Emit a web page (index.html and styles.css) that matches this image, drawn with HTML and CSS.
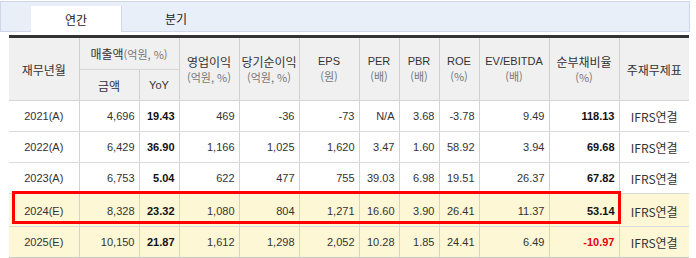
FILE: index.html
```html
<!DOCTYPE html>
<html lang="ko">
<head>
  <meta charset="UTF-8">
  <title>재무 요약</title>
  <link rel="stylesheet" href="styles.css">
</head>
<body>
<div class="wrap">
  <div class="tabs">
    <a class="tab on">연간</a>
    <a class="tab">분기</a>
  </div>
  <div class="grid">
    <table>
      <colgroup>
        <col style="width:70px"><col style="width:60px"><col style="width:40px">
        <col style="width:60px"><col style="width:60px"><col style="width:60px">
        <col style="width:40px"><col style="width:40px"><col style="width:40px">
        <col style="width:70px"><col style="width:70px"><col style="width:70px">
      </colgroup>
      <thead>
        <tr class="h1">
          <th rowspan="2">재무년월</th>
          <th colspan="2">매출액<span class="unit">(억원, %)</span></th>
          <th rowspan="2">영업이익<br><span class="unit">(억원, %)</span></th>
          <th rowspan="2">당기순이익<br><span class="unit">(억원, %)</span></th>
          <th rowspan="2" class="en">EPS<br><span class="unit">(원)</span></th>
          <th rowspan="2" class="en">PER<br><span class="unit">(배)</span></th>
          <th rowspan="2" class="en">PBR<br><span class="unit">(배)</span></th>
          <th rowspan="2" class="en">ROE<br><span class="unit">(%)</span></th>
          <th rowspan="2" class="en">EV/EBITDA<br><span class="unit">(배)</span></th>
          <th rowspan="2">순부채비율<br><span class="unit">(%)</span></th>
          <th rowspan="2">주재무제표</th>
        </tr>
        <tr class="h2">
          <th>금액</th>
          <th class="en">YoY</th>
        </tr>
      </thead>
      <tbody>
        <tr>
          <td class="yr">2021(A)</td><td>4,696</td><td class="b">19.43</td><td>469</td><td>-36</td><td>-73</td>
          <td>N/A</td><td>3.68</td><td>-3.78</td><td>9.49</td><td class="b">118.13</td><td class="std">IFRS연결</td>
        </tr>
        <tr>
          <td class="yr">2022(A)</td><td>6,429</td><td class="b">36.90</td><td>1,166</td><td>1,025</td><td>1,620</td>
          <td>3.47</td><td>1.60</td><td>58.92</td><td>3.94</td><td class="b">69.68</td><td class="std">IFRS연결</td>
        </tr>
        <tr>
          <td class="yr">2023(A)</td><td>6,753</td><td class="b">5.04</td><td>622</td><td>477</td><td>755</td>
          <td>39.03</td><td>6.98</td><td>19.51</td><td>26.37</td><td class="b">67.82</td><td class="std">IFRS연결</td>
        </tr>
        <tr class="est first">
          <td class="yr">2024(E)</td><td>8,328</td><td class="b">23.32</td><td>1,080</td><td>804</td><td>1,271</td>
          <td>16.60</td><td>3.90</td><td>26.41</td><td>11.37</td><td class="b">53.14</td><td class="std">IFRS연결</td>
        </tr>
        <tr class="est">
          <td class="yr">2025(E)</td><td>10,150</td><td class="b">21.87</td><td>1,612</td><td>1,298</td><td>2,052</td>
          <td>10.28</td><td>1.85</td><td>24.41</td><td>6.49</td><td class="b neg">-10.97</td><td class="std">IFRS연결</td>
        </tr>
      </tbody>
    </table>
    <div class="mark"></div>
  </div>
</div>
</body>
</html>
```
FILE: styles.css
```css
html, body {
  margin: 0;
  padding: 0;
  background-color: #fff;
}
.wrap {
  width: 680px;
  margin-left: 9px;
  padding-top: 1px;
  font-family: "Liberation Sans", "Noto Sans CJK KR", sans-serif;
  color: #333;
}
.tabs {
  display: flex;
  height: 25px;
  padding: 4px 0 0 30px;
  background-color: #e8eff9;
  border: 1px solid #cdd7e8;
  margin-left: -9px;
  width: 658px;
}
.tab {
  display: flex;
  align-items: center;
  justify-content: center;
  width: 108px;
  height: 25px;
  font-family: "Noto Sans CJK KR", sans-serif;
  font-size: 12px;
  color: #222;
}
.tab.on {
  width: 90px;
  background-color: #fff;
  border-right: 1px solid #cdd7e8;
  height: 26px;
}
.grid {
  position: relative;
  margin-top: 3px;
}
table {
  width: 680px;
  table-layout: fixed;
  border-collapse: collapse;
  border-top: 3px solid #333;
  border-bottom: 2px solid #c8c8c8;
}
th {
  background-color: #f0f0f0;
  font-family: "Noto Sans CJK KR", sans-serif;
  font-weight: normal;
  font-size: 12px;
  line-height: 15px;
  color: #333;
  border-left: 1px solid #cfcfcf;
  border-bottom: 1px solid #d6d6d6;
  padding: 0;
  white-space: nowrap;
}
th:first-child {
  border-left: none;
}
.h1 th {
  height: 31px;
}
.h2 th {
  height: 30px;
}
.h2 th:first-child {
  border-left: 1px solid #cfcfcf;
}
th.en {
  font-family: "Liberation Sans", "Noto Sans CJK KR", sans-serif;
  font-size: 11px;
}
.unit {
  font-family: "Noto Sans CJK KR", sans-serif;
  font-size: 11px;
  line-height: 15px;
  color: #777;
}
td {
  height: 30px;
  padding: 0 4px 0 0;
  font-size: 11px;
  text-align: right;
  color: #333;
  border-left: 1px solid #d3d3d3;
  border-bottom: 1px solid #dadada;
  white-space: nowrap;
}
td:first-child {
  border-left: none;
}
td.yr {
  text-align: center;
  padding: 0;
}
td.b {
  font-weight: bold;
  color: #111;
}
td.neg {
  color: #e8000b;
}
td.std {
  text-align: center;
  padding: 0;
  font-size: 12px;
  font-family: "Noto Sans CJK KR", sans-serif;
}
.est td {
  background-color: #fdf7d5;
}
.est.first td {
  height: 30px;
  padding-top: 2px;
}
.mark {
  position: absolute;
  left: 3px;
  top: 156px;
  width: 603px;
  height: 27px;
  border: 3px solid #f00;
}
```
